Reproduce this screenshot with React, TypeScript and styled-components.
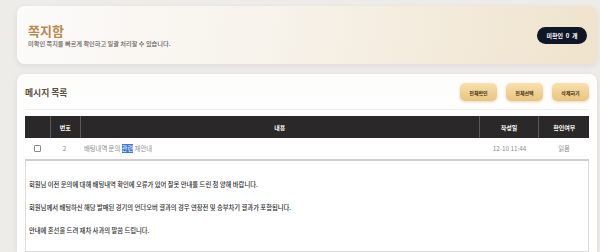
import React from 'react';
import styled, { createGlobalStyle } from 'styled-components';

const GlobalStyle = createGlobalStyle`
  html, body {
    margin: 0;
    padding: 0;
    background: #eeece8;
    font-family: 'Noto Sans CJK KR', 'Noto Sans', sans-serif;
    overflow: hidden;
  }
`;

const COLUMNS = [
  { key: 'check', label: '', width: 25 },
  { key: 'no', label: '번호', width: 29 },
  { key: 'content', label: '내용', width: 401 },
  { key: 'date', label: '작성일', width: 59 },
  { key: 'read', label: '확인여부', width: 50 },
];

const BODY_LINES = [
  '회원님 이전 문의에 대해 배팅내역 확인에 오류가 있어 잘못 안내를 드린 점 양해 바랍니다.',
  '회원님께서 배팅하신 해당 발매된 경기의 언더오버 결과의 경우 연장전 및 승부차기 결과가 포함됩니다.',
  '안내에 혼선을 드려 재차 사과의 말씀 드립니다.',
];

export default function App() {
  return (
    <Page>
      <GlobalStyle />
      <HeroCard>
        <HeroText>
          <HeroTitle>쪽지함</HeroTitle>
          <HeroSub>미확인 쪽지를 빠르게 확인하고 일괄 처리할 수 있습니다.</HeroSub>
        </HeroText>
        <UnreadBadge>미확인&nbsp; 0 &nbsp;개</UnreadBadge>
      </HeroCard>

      <ListCard>
        <ListHeader>
          <ListTitle>메시지 목록</ListTitle>
          <Actions>
            <GoldButton>전체확인</GoldButton>
            <GoldButton>전체선택</GoldButton>
            <GoldButton>삭제하기</GoldButton>
          </Actions>
        </ListHeader>

        <Table>
          <HeadRow>
            {COLUMNS.map((c) => (
              <HeadCell key={c.key} $w={c.width}>
                {c.label}
              </HeadCell>
            ))}
          </HeadRow>
          <BodyRow>
            <Cell $w={25}>
              <CheckBox />
            </Cell>
            <Cell $w={29}>2</Cell>
            <Cell $w={401} $left>
              배팅내역 문의 <Selected>관련</Selected> 재안내
            </Cell>
            <Cell $w={59}>12-10 11:44</Cell>
            <Cell $w={50}>읽음</Cell>
          </BodyRow>
          <Detail>
            {BODY_LINES.map((line, idx) => (
              <DetailLine key={idx}>{line}</DetailLine>
            ))}
          </Detail>
        </Table>
      </ListCard>
    </Page>
  );
}

const Page = styled.div`
  display: flex;
  flex-direction: column;
  gap: 10px;
  padding: 6px 3px 0 17px;
  height: 252px;
  box-sizing: border-box;
`;

const HeroCard = styled.div`
  height: 58px;
  flex-shrink: 0;
  box-sizing: border-box;
  display: flex;
  align-items: center;
  justify-content: space-between;
  padding: 0 10px 0 11px;
  border-radius: 8px;
  background: linear-gradient(100deg, #fcfbfa 0%, #f7f2ea 45%, #efe3cc 100%);
  box-shadow: 0 2px 6px rgba(0, 0, 0, 0.08);
`;

const HeroText = styled.div`
  display: flex;
  flex-direction: column;
`;

const HeroTitle = styled.div`
  font-size: 13px;
  font-weight: 700;
  line-height: 17px;
  color: #b98a52;
`;

const HeroSub = styled.div`
  font-size: 6.2px;
  line-height: 9px;
  color: #5f5a55;
  font-weight: 500;
`;

const UnreadBadge = styled.div`
  width: 50px;
  height: 17px;
  border-radius: 9px;
  background: #0e1628;
  color: #fff;
  font-size: 6px;
  font-weight: 700;
  display: flex;
  align-items: center;
  justify-content: center;
`;

const ListCard = styled.div`
  flex: 1;
  border-radius: 8px 8px 0 0;
  background: linear-gradient(180deg, #fdfcfb 0%, #ffffff 40px);
  box-shadow: 0 2px 6px rgba(0, 0, 0, 0.08);
  padding: 9px 8px 0 8px;
  display: flex;
  flex-direction: column;
  overflow: hidden;
`;

const ListHeader = styled.div`
  display: flex;
  align-items: center;
  justify-content: space-between;
  height: 18px;
  padding-bottom: 8px;
  border-bottom: 1px solid #f0eeea;
  margin-bottom: 6px;
`;

const ListTitle = styled.div`
  font-size: 8.8px;
  font-weight: 700;
  color: #5c4e3e;
`;

const Actions = styled.div`
  display: flex;
  gap: 9px;
`;

const GoldButton = styled.button`
  width: 37px;
  height: 18px;
  border: none;
  border-radius: 5px;
  padding: 0;
  background: linear-gradient(180deg, #f7e1ad 0%, #e9c47e 100%);
  box-shadow: 0 1px 3px rgba(160, 120, 50, 0.3);
  color: #3f3018;
  font-family: inherit;
  font-size: 5px;
  font-weight: 700;
`;

const Table = styled.div`
  display: flex;
  flex-direction: column;
  flex: 1;
`;

const HeadRow = styled.div`
  display: flex;
  height: 22px;
  background: #2a2828;
`;

const HeadCell = styled.div<{ $w: number }>`
  width: ${(p) => p.$w}px;
  display: flex;
  align-items: center;
  justify-content: center;
  color: #fff;
  font-size: 6px;
  font-weight: 700;
  & + & {
    border-left: 1px solid #5a5858;
  }
`;

const BodyRow = styled.div`
  display: flex;
  height: 21px;
  background: #fff;
  border-bottom: 2px solid #cfcfcf;
`;

const Cell = styled.div<{ $w: number; $left?: boolean }>`
  width: ${(p) => p.$w}px;
  display: flex;
  align-items: center;
  justify-content: ${(p) => (p.$left ? 'flex-start' : 'center')};
  padding-left: ${(p) => (p.$left ? '5px' : '0')};
  box-sizing: border-box;
  font-size: 6.3px;
  color: #8c8c8c;
  white-space: pre;
`;

const CheckBox = styled.span`
  width: 5px;
  height: 5px;
  border: 1px solid #8a8a8a;
  border-radius: 1px;
  background: #fff;
`;

const Selected = styled.span`
  background: #3b78dc;
  color: #fff;
`;

const Detail = styled.div`
  flex: 1;
  background: #fff;
  border: 1px solid #dcdcdc;
  border-top: none;
  padding: 19px 3px 0 3px;
  display: flex;
  flex-direction: column;
  gap: 14px;
`;

const DetailLine = styled.div`
  font-size: 6.3px;
  line-height: 9px;
  color: #2c2c2c;
  font-weight: 500;
`;
